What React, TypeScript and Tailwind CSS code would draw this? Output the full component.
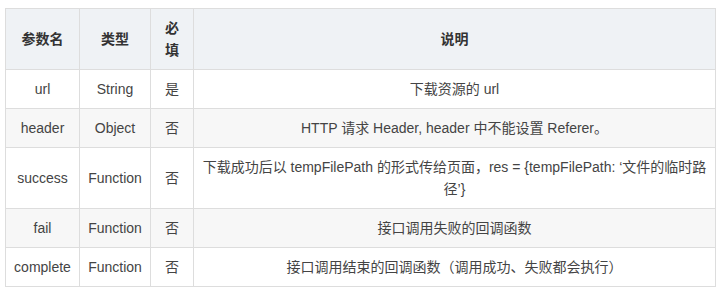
const rows = [
  { name: "url", type: "String", required: "是", desc: "下载资源的 url" },
  { name: "header", type: "Object", required: "否", desc: "HTTP 请求 Header, header 中不能设置 Referer。" },
  {
    name: "success",
    type: "Function",
    required: "否",
    desc: "下载成功后以 tempFilePath 的形式传给页面，res = {tempFilePath: ‘文件的临时路径’}",
  },
  { name: "fail", type: "Function", required: "否", desc: "接口调用失败的回调函数" },
  { name: "complete", type: "Function", required: "否", desc: "接口调用结束的回调函数（调用成功、失败都会执行）" },
];

const font = { fontFamily: '"Liberation Sans", "Noto Sans CJK SC", sans-serif' };

export default function App() {
  return (
    <div className="bg-white w-[723px] h-[291px] pt-[8px] pl-[5px]" style={font}>
      <table className="border-collapse table-fixed w-[711px] text-[14px] leading-[22px] text-[#444]">
        <colgroup>
          <col className="w-[74px]" />
          <col className="w-[71px]" />
          <col className="w-[43px]" />
          <col />
        </colgroup>
        <thead>
          <tr className="bg-[#eff2f5] text-[#333]">
            <th className="border border-[#ddd] px-[10px] py-[8px] font-bold text-center">参数名</th>
            <th className="border border-[#ddd] px-[10px] py-[8px] font-bold text-center">类型</th>
            <th className="border border-[#ddd] px-[10px] py-[8px] font-bold text-center">必填</th>
            <th className="border border-[#ddd] px-[10px] py-[8px] font-bold text-center">说明</th>
          </tr>
        </thead>
        <tbody>
          {rows.map((r, i) => (
            <tr key={r.name} className={i % 2 === 1 ? "bg-[#f7f7f7]" : "bg-white"}>
              <td className="border border-[#ddd] px-[8px] py-[8px] text-center">{r.name}</td>
              <td className="border border-[#ddd] px-[8px] py-[8px] text-center">{r.type}</td>
              <td className="border border-[#ddd] px-[8px] py-[8px] text-center">{r.required}</td>
              <td className="border border-[#ddd] px-[8px] py-[8px] text-center">{r.desc}</td>
            </tr>
          ))}
        </tbody>
      </table>
    </div>
  );
}
